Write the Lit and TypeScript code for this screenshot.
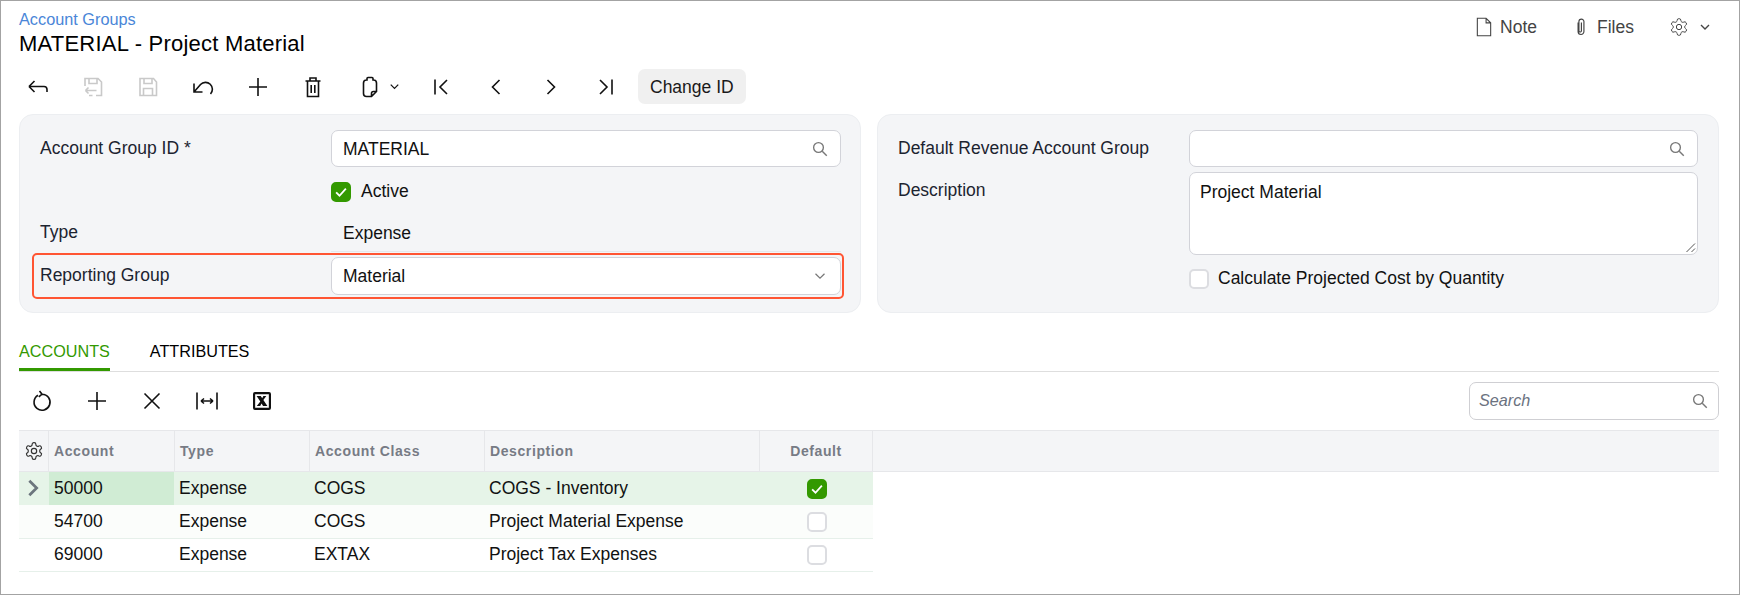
import { LitElement, html, css, svg, nothing } from 'lit';
import { customElement } from 'lit/decorators.js';

const GEAR = svg`<path d="M12.22 2h-.44a2 2 0 0 0-2 2v.18a2 2 0 0 1-1 1.73l-.43.25a2 2 0 0 1-2 0l-.15-.08a2 2 0 0 0-2.73.73l-.22.38a2 2 0 0 0 .73 2.73l.15.1a2 2 0 0 1 1 1.72v.51a2 2 0 0 1-1 1.74l-.15.09a2 2 0 0 0-.73 2.73l.22.38a2 2 0 0 0 2.73.73l.15-.08a2 2 0 0 1 2 0l.43.25a2 2 0 0 1 1 1.73V20a2 2 0 0 0 2 2h.44a2 2 0 0 0 2-2v-.18a2 2 0 0 1 1-1.73l.43-.25a2 2 0 0 1 2 0l.15.08a2 2 0 0 0 2.73-.73l.22-.39a2 2 0 0 0-.73-2.73l-.15-.08a2 2 0 0 1-1-1.74v-.5a2 2 0 0 1 1-1.74l.15-.09a2 2 0 0 0 .73-2.73l-.22-.38a2 2 0 0 0-2.73-.73l-.15.08a2 2 0 0 1-2 0l-.43-.25a2 2 0 0 1-1-1.73V4a2 2 0 0 0-2-2z"/><circle cx="12" cy="12" r="3.2"/>`;

const ICONS = {
  back: svg`<path d="M3 11.5h15a3 3 0 0 1 3 3v2.5M3 11.5l5.5-5.5M3 11.5l5.5 5.5"/>`,
  saveBack: svg`<path d="M4 11V3.500h13L20.500 7v13.500H15M8 3.500v5h8v-5M15.500 15.500H4.500M4.500 15.500l3-3M4.500 15.500l3 3M8 20.500h3.500"/>`,
  save: svg`<path d="M4 3.500h13.500L20.500 7v13.500H4zM8 3.500v5h8v-5M7.500 20.500v-7h9v7"/>`,
  undo: svg`<path d="M3 8.500v8.500h8.500M3 17l6.500-7.500a6.600 6.600 0 0 1 10 9.500"/>`,
  plus: svg`<path d="M12 3v18M3 12h18"/>`,
  trash: svg`<path d="M4.500 6h15M6.500 6v15.500h11V6M9 6V3h6v3M10.200 10v8M13.800 10v8"/>`,
  paste: svg`<path d="M9 5V3.500a1 1 0 0 1 1-1h4a1 1 0 0 1 1 1V5h.500a3 3 0 0 1 3 3v8.500l-5 5H8.500a3 3 0 0 1-3-3V8a3 3 0 0 1 3-3zM18.500 16.500h-3a2 2 0 0 0-2 2v3"/>`,
  first: svg`<path d="M6 4.500v15M18 5l-7 7 7 7"/>`,
  prev: svg`<path d="M15.500 5l-7 7 7 7"/>`,
  next: svg`<path d="M8.500 5l7 7-7 7"/>`,
  last: svg`<path d="M18 4.500v15M6 5l7 7-7 7"/>`,
  chevron: svg`<path d="M6 9l6 6 6-6"/>`,
  search: svg`<circle cx="10" cy="10" r="6.500"/><path d="M15 15l6 6"/>`,
  note: svg`<path d="M4 1.500h10.500l5.500 5.500v15.500H4zM14.500 1.500V7H20"/>`,
  clip: svg`<path d="M8.500 6.500v11a3.500 3.500 0 0 0 7 0V5.500a3 3 0 0 0-6 0v11a1.500 1.500 0 0 0 3 0V6.500"/>`,
  gear: GEAR,
  refresh: svg`<path d="M8 6.300a8 8 0 1 0 4-1.100M9.500 2l2.500 3.200-3.200 2.600"/>`,
  close: svg`<path d="M4.500 4.500l15 15M19.500 4.500l-15 15"/>`,
  fit: svg`<path d="M2 3.500v17M22 3.500v17M6 12h12M6 12l3-2.500M6 12l3 2.500M18 12l-3-2.500M18 12l-3 2.500"/>`,
  arrow: svg`<path d="M8 4l8 8-8 8"/>`,
  tick: svg`<path d="M5.500 12.500l4.500 4.500 8.500-9.500"/>`,
};

type IconName = keyof typeof ICONS;

const icon = (name: IconName, size = 24, sw = 1.6) =>
  html`<svg width=${size} height=${size} viewBox="0 0 24 24" fill="none" stroke="currentColor" stroke-width=${sw}>${ICONS[name]}</svg>`;

// excel export glyph: heavy box with a serif cross
const excelIcon = html`<svg width="18" height="18" viewBox="0 0 20 20">
  <rect x="1.200" y="1.200" width="17.600" height="17.600" rx="1" fill="#fff" stroke="#111" stroke-width="2.400"/>
  <path d="M4 4.500h4.600l1.600 2.500 1.300-2.500h3.300L11.500 9l4.500 6.500h-4.800l-1.700-2.700-1.500 2.700H4.200l3.900-4.900z" fill="#111"/>
</svg>`;

const rows = [
  { account: '50000', type: 'Expense', cls: 'COGS', desc: 'COGS - Inventory', def: true },
  { account: '54700', type: 'Expense', cls: 'COGS', desc: 'Project Material Expense', def: false },
  { account: '69000', type: 'Expense', cls: 'EXTAX', desc: 'Project Tax Expenses', def: false },
];

@customElement('app-root')
export class AppRoot extends LitElement {
  static styles = css`
    :host {
      display: block;
      width: 1740px;
      height: 595px;
      box-sizing: border-box;
      border: 1px solid #a3a3a3;
      padding: 0 20px 0 18px;
      background: #fff;
      color: #111;
      font: 17.5px/20px 'Liberation Sans', Arial, sans-serif;
      overflow: hidden;
    }
    svg {
      display: block;
      flex: none;
    }
    .header {
      display: flex;
      justify-content: space-between;
      padding-top: 8px;
    }
    .crumb {
      color: #4a86d8;
      font-size: 16.3px;
    }
    .title {
      font-size: 22px;
      line-height: 28px;
      margin-top: 1px;
      color: #000;
      letter-spacing: 0.22px;
    }
    .actions {
      display: flex;
      align-items: center;
      height: 20px;
      margin: 8px 6px 0 0;
      color: #444;
    }
    .actions .ic-note {
      margin-right: 6px;
    }
    .actions .ic-clip {
      margin: 0 6px 0 34px;
    }
    .actions .ic-gear {
      margin: 0 8px 0 35px;
    }
    .toolbar {
      display: flex;
      align-items: center;
      height: 35px;
      margin: 11px 0 0 -9px;
    }
    .tool {
      display: flex;
      align-items: center;
      justify-content: center;
      width: 55px;
      height: 35px;
      color: #111;
    }
    .tool.off {
      color: #c9c9c9;
    }
    .tool.menu {
      box-sizing: border-box;
      width: 73px;
      gap: 5px;
      padding-left: 18px;
      justify-content: flex-start;
    }
    .change {
      display: flex;
      align-items: center;
      height: 35px;
      padding: 0 12px;
      margin-left: 5px;
      border-radius: 7px;
      background: #f0f0f0;
      color: #1a1a1a;
    }
    .panels {
      display: grid;
      grid-template-columns: 842px 842px;
      gap: 16px;
      margin: 10px 0 0 0;
    }
    .panel {
      box-sizing: border-box;
      height: 199px;
      padding: 15px 20px 0;
      border: 1px solid #eceef1;
      border-radius: 14px;
      background: #f4f5f7;
    }
    .row {
      display: grid;
      grid-template-columns: 291px 510px;
      align-items: center;
      color: #1c2430;
    }
    .row > span {
      padding-bottom: 2px;
    }
    .panel.right .row {
      grid-template-columns: 291px 509px;
    }
    .field {
      position: relative;
      display: flex;
      align-items: center;
      justify-content: space-between;
      box-sizing: border-box;
      height: 37px;
      padding: 0 11px 0 11px;
      border: 1px solid #d2d3d9;
      border-radius: 7px;
      background: #fff;
      color: #111;
    }
    .field svg {
      color: #777;
    }
    .check-row {
      display: flex;
      align-items: center;
      gap: 10px;
      height: 20px;
      color: #111;
    }
    .cap {
      padding-bottom: 2px;
    }
    .box {
      display: flex;
      align-items: center;
      justify-content: center;
      box-sizing: border-box;
      width: 20px;
      height: 20px;
      border: 2px solid #dcdde1;
      border-radius: 5px;
      background: #fff;
      color: #fff;
    }
    .box.on {
      border-color: #339900;
      background: #339900;
    }
    .active {
      margin-top: 15px;
    }
    .type {
      height: 38px;
      margin-top: 12px;
    }
    .type .value {
      display: flex;
      align-items: center;
      height: 37px;
      padding-left: 12px;
      border-bottom: 1px solid #e6e7ea;
      color: #111;
    }
    .flagged {
      box-sizing: border-box;
      height: 46px;
      margin: 1px -4px 0 -8px;
      padding: 2px 2px 2px 6px;
      border: 2px solid #ff5533;
      border-radius: 5px;
    }
    .flagged .field {
      height: 38px;
    }
    .gap-s {
      margin-top: 5px;
      align-items: start;
    }
    .gap-s > span {
      padding: 8px 0 0;
    }
    .area {
      position: relative;
      box-sizing: border-box;
      height: 83px;
      padding: 9px 10px;
      border: 1px solid #d2d3d9;
      border-radius: 7px;
      background: #fff;
      color: #111;
    }
    .grip {
      position: absolute;
      right: 1px;
      bottom: 1px;
      color: #555;
    }
    .calc {
      margin-top: 14px;
    }
    .calc .check-row {
      gap: 9px;
    }
    .tabs {
      display: flex;
      gap: 40px;
      margin-top: 28px;
      height: 30px;
      border-bottom: 1px solid #dedede;
      font-size: 16.2px;
    }
    .tab {
      height: 30px;
      box-sizing: border-box;
      color: #000;
    }
    .tab.on {
      color: #339900;
      border-bottom: 3px solid #339900;
      border-radius: 3px 3px 0 0;
    }
    .grid-bar {
      display: flex;
      align-items: center;
      justify-content: space-between;
      height: 58px;
    }
    .grid-tools {
      display: flex;
      margin-left: -5px;
    }
    .search {
      display: flex;
      align-items: center;
      justify-content: space-between;
      box-sizing: border-box;
      width: 250px;
      height: 38px;
      padding: 0 9px;
      border: 1px solid #cfcfd3;
      border-radius: 7px;
      color: #6b7280;
      font-size: 16.2px;
      font-style: italic;
    }
    .search svg {
      color: #777;
    }
    .thead,
    .tr {
      display: grid;
      grid-template-columns: 30px 126px 135px 175px 275px 113px;
    }
    .thead {
      box-sizing: border-box;
      height: 42px;
      border-top: 1px solid #e6e7ea;
      border-bottom: 1px solid #e6e7ea;
      background: #f4f5f7;
      color: #777b85;
      font-size: 14px;
      font-weight: bold;
      letter-spacing: 0.6px;
    }
    .th {
      display: flex;
      align-items: center;
      padding-left: 5px;
      border-right: 1px solid #e6e7ea;
    }
    .th.gear {
      padding-left: 5px;
      color: #333;
    }
    .th.center {
      justify-content: center;
      padding-left: 0;
    }
    .tr {
      box-sizing: border-box;
      width: 854px;
      height: 33px;
      border-bottom: 1px solid #e6f0ea;
    }
    .tr:nth-child(2) {
      height: 34px;
      background: #fbfdfb;
    }
    .tr.current {
      background: #e6f4e8;
      border-bottom: none;
    }
    .td {
      display: flex;
      align-items: center;
      padding: 0 0 2px 4px;
      color: #111;
    }
    .td.mark {
      padding-left: 3px;
      color: #6c757d;
    }
    .td.code {
      padding-left: 5px;
    }
    .td.hot {
      margin-right: 1px;
      background: #d0ecd4;
    }
    .td.center {
      justify-content: center;
      padding: 0;
    }
  `;

  private renderRow(r: (typeof rows)[number], i: number) {
    return html`<div class="tr ${i === 0 ? 'current' : ''}">
      <div class="td mark">${i === 0 ? icon('arrow', 22, 3) : nothing}</div>
      <div class="td code ${i === 0 ? 'hot' : ''}">${r.account}</div>
      <div class="td">${r.type}</div>
      <div class="td">${r.cls}</div>
      <div class="td">${r.desc}</div>
      <div class="td center">
        <span class="box ${r.def ? 'on' : ''}">${r.def ? icon('tick', 18, 2.4) : nothing}</span>
      </div>
    </div>`;
  }

  render() {
    return html`
      <div class="header">
        <div>
          <div class="crumb">Account Groups</div>
          <div class="title">MATERIAL - Project Material</div>
        </div>
        <div class="actions">
          <span class="ic-note">${icon('note', 20, 1.3)}</span>Note
          <span class="ic-clip">${icon('clip', 20, 1.4)}</span>Files
          <span class="ic-gear">${icon('gear', 20, 1.2)}</span>${icon('chevron', 16, 2)}
        </div>
      </div>

      <div class="toolbar">
        <div class="tool">${icon('back')}</div>
        <div class="tool off">${icon('saveBack')}</div>
        <div class="tool off">${icon('save')}</div>
        <div class="tool">${icon('undo')}</div>
        <div class="tool">${icon('plus')}</div>
        <div class="tool">${icon('trash')}</div>
        <div class="tool menu">${icon('paste')}${icon('chevron', 15, 2)}</div>
        <div class="tool">${icon('first')}</div>
        <div class="tool">${icon('prev')}</div>
        <div class="tool">${icon('next')}</div>
        <div class="tool">${icon('last')}</div>
        <div class="change">Change ID</div>
      </div>

      <div class="panels">
        <div class="panel">
          <div class="row">
            <span>Account Group ID *</span>
            <div class="field">MATERIAL ${icon('search', 18, 1.8)}</div>
          </div>
          <div class="row active">
            <span></span>
            <div class="check-row"><span class="box on">${icon('tick', 18, 2.4)}</span><span class="cap">Active</span></div>
          </div>
          <div class="row type">
            <span>Type</span>
            <div class="value">Expense</div>
          </div>
          <div class="row flagged">
            <span>Reporting Group</span>
            <div class="field">Material ${icon('chevron', 18, 1.6)}</div>
          </div>
        </div>

        <div class="panel right">
          <div class="row">
            <span>Default Revenue Account Group</span>
            <div class="field"><span></span>${icon('search', 18, 1.8)}</div>
          </div>
          <div class="row gap-s">
            <span>Description</span>
            <div class="area">
              Project Material
              <svg class="grip" width="11" height="11" viewBox="0 0 11 11" fill="none" stroke="currentColor" stroke-width="1">
                <path d="M1.500 10L10 1.500M6.500 10L10 6.500"/>
              </svg>
            </div>
          </div>
          <div class="row calc">
            <span></span>
            <div class="check-row"><span class="box"></span><span class="cap">Calculate Projected Cost by Quantity</span></div>
          </div>
        </div>
      </div>

      <div class="tabs">
        <div class="tab on">ACCOUNTS</div>
        <div class="tab">ATTRIBUTES</div>
      </div>

      <div class="grid-bar">
        <div class="grid-tools">
          <div class="tool">${icon('refresh')}</div>
          <div class="tool">${icon('plus')}</div>
          <div class="tool">${icon('close')}</div>
          <div class="tool">${icon('fit')}</div>
          <div class="tool">${excelIcon}</div>
        </div>
        <div class="search"><span class="cap">Search</span> ${icon('search', 18, 1.8)}</div>
      </div>

      <div class="thead">
        <div class="th gear">${icon('gear', 20, 1.4)}</div>
        <div class="th">Account</div>
        <div class="th">Type</div>
        <div class="th">Account Class</div>
        <div class="th">Description</div>
        <div class="th center">Default</div>
      </div>
      <div>${rows.map((r, i) => this.renderRow(r, i))}</div>
    `;
  }
}
